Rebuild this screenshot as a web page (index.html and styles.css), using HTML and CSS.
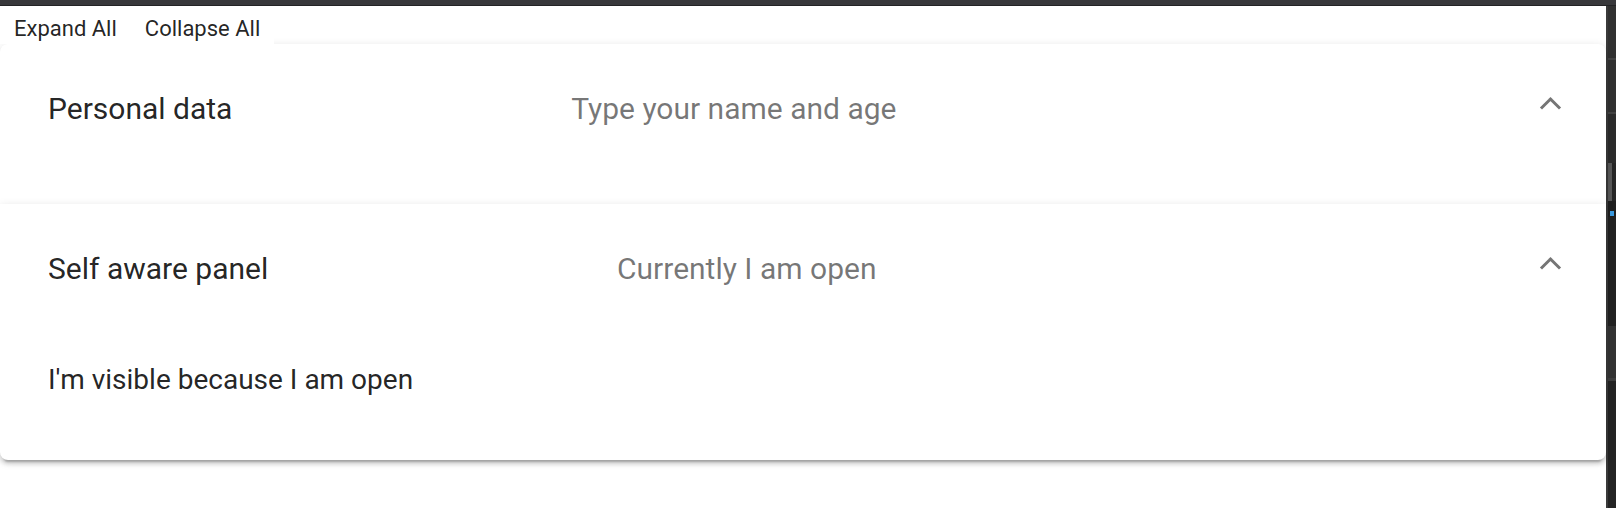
FILE: index.html
```html
<!DOCTYPE html>
<html lang="en">
<head>
<meta charset="utf-8">
<title>Accordion</title>
<link rel="stylesheet" href="styles.css">
</head>
<body>
<div class="topbar"></div>
<div class="main">
  <div class="content">
    <div class="actions">
      <button class="action-btn" type="button">Expand All</button>
      <button class="action-btn" type="button">Collapse All</button>
    </div>
    <div class="accordion">
      <section class="panel panel-first">
        <div class="panel-header">
          <span class="header-content">
            <span class="panel-title">Personal data</span>
            <span class="panel-desc">Type your name and age</span>
          </span>
          <span class="indicator"></span>
        </div>
        <div class="panel-body"></div>
      </section>
      <section class="panel panel-last">
        <div class="panel-header">
          <span class="header-content">
            <span class="panel-title">Self aware panel</span>
            <span class="panel-desc">Currently I am open</span>
          </span>
          <span class="indicator"></span>
        </div>
        <div class="panel-body">
          <p class="panel-text">I'm visible because I am open</p>
        </div>
      </section>
    </div>
  </div>
  <div class="strip">
    <div class="strip-edge"></div>
    <div class="strip-col">
      <div class="seg seg-a"></div>
      <div class="seg seg-sep"></div>
      <div class="seg seg-b"></div>
      <div class="seg seg-sep"></div>
      <div class="seg seg-c"></div>
      <div class="seg seg-thumb"><div class="thumb"></div></div>
      <div class="seg seg-d"></div>
      <div class="seg seg-dot"><div class="dot"></div></div>
      <div class="seg seg-e"></div>
      <div class="seg seg-f"></div>
      <div class="seg seg-sep2"></div>
      <div class="seg seg-g"></div>
    </div>
  </div>
</div>
</body>
</html>
```

FILE: styles.css
```css
html, body {
  margin: 0;
  padding: 0;
  background: #ffffff;
  font-family: Roboto, "Noto Sans", "Liberation Sans", sans-serif;
}

.topbar {
  height: 5px;
  background: #38383b;
  border-bottom: 1px solid #232325;
}

.main {
  display: flex;
  height: 502px;
}

.content {
  flex: 1;
  min-width: 0;
}

.actions {
  display: flex;
  width: fit-content;
  background: #ffffff;
  position: relative;
  z-index: 1;
}

.action-btn {
  font-family: Roboto, "Noto Sans", "Liberation Sans", sans-serif;
  font-size: 22px;
  line-height: 31px;
  height: 38px;
  padding: 7px 14px 0;
  margin: 0;
  border: 0;
  background: #ffffff;
  color: rgba(0, 0, 0, 0.87);
  cursor: pointer;
}

.accordion {
  display: flex;
  flex-direction: column;
}

.panel {
  background: #ffffff;
  color: rgba(0, 0, 0, 0.87);
  box-shadow: 0 6px 2px -4px rgba(0, 0, 0, 0.2),
              0 4px 4px 0 rgba(0, 0, 0, 0.14),
              0 2px 10px 0 rgba(0, 0, 0, 0.12);
  position: relative;
}

.panel-first {
  border-radius: 8px 8px 0 0;
}

.panel-last {
  border-radius: 0 0 8px 8px;
}

.panel-header {
  display: flex;
  align-items: center;
  height: 128px;
  padding: 0 48px;
}

.header-content {
  display: flex;
  flex: 1;
  overflow: hidden;
}

.panel-title,
.panel-desc {
  display: flex;
  align-items: center;
  flex-grow: 1;
  margin-right: 32px;
  font-size: 30px;
  white-space: nowrap;
}

.panel-title {
  color: rgba(0, 0, 0, 0.87);
}

.panel-desc {
  flex-grow: 2;
  color: rgba(0, 0, 0, 0.54);
}

.indicator {
  display: flex;
  align-items: center;
  justify-content: center;
  width: 16px;
  height: 16px;
  margin-bottom: 4px;
}

.indicator::after {
  content: "";
  display: block;
  box-sizing: border-box;
  width: 15px;
  height: 15px;
  border-style: solid;
  border-color: rgba(0, 0, 0, 0.54);
  border-width: 0 3px 3px 0;
  transform: translateY(1px) rotate(225deg);
}

.panel-body {
  padding: 0 48px 32px;
}

.panel-text {
  margin: 28px 0;
  font-size: 28px;
  line-height: 40px;
  color: rgba(0, 0, 0, 0.87);
}

.strip {
  width: 10px;
  display: flex;
  background: #262626;
}

.strip-edge {
  width: 2px;
  background: #3a3a3a;
}

.strip-col {
  flex: 1;
  display: flex;
  flex-direction: column;
}

.seg-a { height: 52px; background: #313131; }
.seg-sep { height: 2px; background: #434343; }
.seg-b { height: 52px; background: #313131; }
.seg-c { height: 49px; background: #2c2c2c; }
.seg-thumb { height: 38px; background: #262626; }
.thumb { width: 4px; height: 100%; background: #585858; }
.seg-d { height: 10px; background: #1f1f1f; }
.seg-dot { height: 6px; background: #1f1f1f; display: flex; justify-content: center; }
.dot { width: 4px; height: 5px; background: #3b9be0; }
.seg-e { height: 109px; background: #222222; }
.seg-f { height: 52px; background: #333333; }
.seg-sep2 { height: 3px; background: #3e3e3e; }
.seg-g { flex: 1; background: #242424; }
```
